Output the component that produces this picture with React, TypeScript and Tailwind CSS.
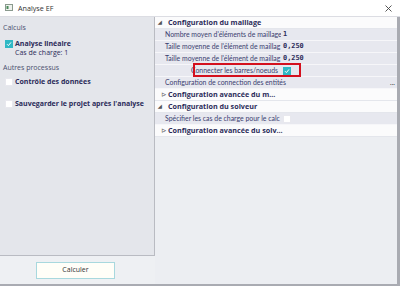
import React from "react";

const font = { fontFamily: '"Open Sans", "Noto Sans", "Liberation Sans", sans-serif' };
const labelFont = { fontFamily: 'Lato, "Liberation Sans", sans-serif' };

function Check({ checked }: { checked?: boolean }) {
  return checked ? (
    <span className="flex h-[8px] w-[8px] shrink-0 items-center justify-center bg-[#2fb8c4]">
      <svg width="6" height="6" viewBox="0 0 6 6">
        <path d="M1 3.2 L2.4 4.6 L5 1.4" stroke="white" strokeWidth="1" fill="none" />
      </svg>
    </span>
  ) : (
    <span className="h-[8px] w-[8px] shrink-0 border border-[#e8e8ee] bg-white" />
  );
}

function Header({ open, label }: { open?: boolean; label: string }) {
  return (
    <div className="flex h-[12px] items-center border-b border-[#e4e6ec] bg-[#fbfbfc] pl-[3px] text-[7.2px] font-bold text-[#2b2b59]">
      {open ? (
        <span className="w-[10px] text-[5px] text-[#555]">◢</span>
      ) : (
        <span className="w-[10px] pl-[4px] text-[5px] text-[#555]">▷</span>
      )}
      {label}
    </div>
  );
}

function Prop({ label, value, right, children }: { label: string; value?: string; right?: boolean; children?: React.ReactNode }) {
  return (
    <div className="flex h-[12px] items-center border-b border-[#f6f6f9] bg-[#e7e8ef] text-[6.9px] text-[#3b4070]">
      <div className={`w-[126px] shrink-0 overflow-hidden whitespace-nowrap pl-[10px] ${right ? "pr-[3px] text-right" : ""}`} style={labelFont}>
        {label}
      </div>
      <div className="flex flex-1 items-center pl-[2px] font-bold text-[#2b2b59]" style={{ fontFamily: '"DejaVu Sans Mono", monospace' }}>
        {value}
        {children}
      </div>
    </div>
  );
}

export default function App() {
  return (
    <div className="flex h-[286px] w-[400px] flex-col bg-white" style={font}>
      <div className="flex h-[17px] shrink-0 items-center justify-between border-b border-[#dcdde3] pl-[5px] pr-[8px]">
        <div className="flex items-center gap-[5px] text-[7.2px] text-[#333]">
          <svg width="8" height="7" viewBox="0 0 8 7">
            <rect x="0.5" y="0.5" width="7" height="6" fill="#eef2ee" stroke="#8a9a8e" />
            <rect x="1.5" y="2" width="2" height="3" fill="#4a8a5a" />
          </svg>
          Analyse EF
        </div>
        <svg width="7" height="7" viewBox="0 0 7 7">
          <path d="M0.5 0.5 L6.5 6.5 M6.5 0.5 L0.5 6.5" stroke="#444" strokeWidth="0.9" />
        </svg>
      </div>
      <div className="flex flex-1 border-b-2 border-r-[3px] border-[#a9abb2]">
        <div className="flex w-[155px] shrink-0 flex-col bg-[#eef0f3]">
          <div className="flex-1 border-b border-r border-[#b9bbc2] bg-[#e4e6eb] pt-[6px] text-[7px] text-[#2b2b59]">
            <div className="pl-[3px] text-[#4a4f6e]">Calculs</div>
            <div className="mt-[5px] flex gap-[2px] pl-[5px]">
              <div className="mt-[1px]"><Check checked /></div>
              <div className="leading-[9px]">
                <div className="font-bold">Analyse linéaire</div>
                <div>Cas de charge: 1</div>
              </div>
            </div>
            <div className="mt-[6px] pl-[3px] text-[#4a4f6e]">Autres processus</div>
            <div className="mt-[4px] flex items-center gap-[2px] pl-[5px] font-bold">
              <Check />
              Contrôle des données
            </div>
            <div className="mt-[11px] flex items-center gap-[2px] pl-[5px] font-bold">
              <Check />
              Sauvegarder le projet après l'analyse
            </div>
          </div>
          <div className="flex h-[28px] shrink-0 items-center pl-[36px]">
            <button className="h-[17px] w-[79px] border border-[#a8d8de] bg-[#fffef8] text-[7px] text-[#333]">Calculer</button>
          </div>
        </div>
        <div className="flex-1 bg-[#eceef2]">
          <Header open label="Configuration du maillage" />
          <Prop label="Nombre moyen d'éléments de maillage" value="1" />
          <Prop label="Taille moyenne de l'élément de maillag" value="0,250" />
          <Prop label="Taille moyenne de l'élément de maillag" value="0,250" />
          <div className="relative">
            <Prop label="Connecter les barres/noeuds" right>
              <Check checked />
            </Prop>
            <div className="absolute left-[38px] top-[-2px] h-[14px] w-[108px] border-2 border-[#d4101e]" />
          </div>
          <div className="flex h-[12px] items-center justify-between border-b border-[#f6f6f9] bg-[#e7e8ef] pl-[10px] pr-[2px] text-[6.9px] text-[#3b4070]" style={labelFont}>
            Configuration de connection des entités
            <span className="text-[#333]">...</span>
          </div>
          <Header label="Configuration avancée du m..." />
          <Header open label="Configuration du solveur" />
          <Prop label="Spécifier les cas de charge pour le calc">
            <Check />
          </Prop>
          <Header label="Configuration avancée du solv..." />
        </div>
      </div>
    </div>
  );
}
